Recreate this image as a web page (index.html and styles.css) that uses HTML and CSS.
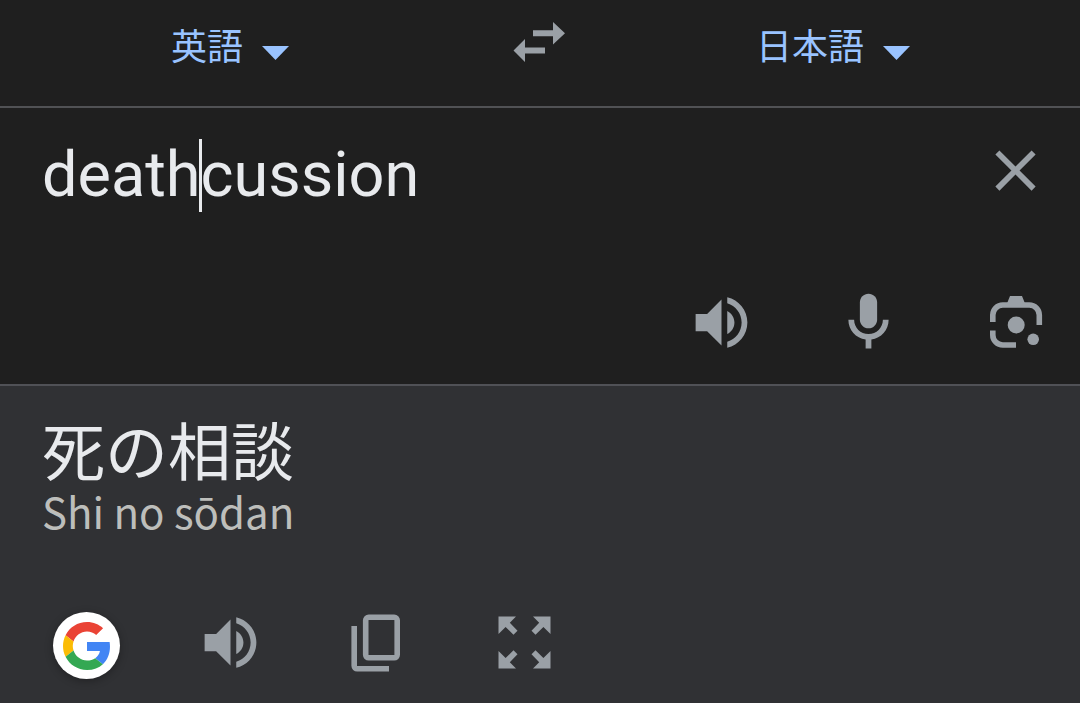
FILE: index.html
```html
<!DOCTYPE html>
<html lang="ja">
<head>
    <meta charset="UTF-8">
    <meta name="viewport" content="width=device-width, initial-scale=1.0">
    <title>翻訳</title>
    <link rel="stylesheet" href="styles.css">
</head>
<body>
    <svg class="sprite">
        <symbol id="volume" viewBox="0 0 24 24">
            <path d="M3 9v6h4l5 5V4L7 9H3zm13.5 3c0-1.77-1.02-3.29-2.5-4.03v8.05c1.48-.73 2.5-2.25 2.5-4.02zM14 3.23v2.06c2.89.86 5 3.54 5 6.71s-2.11 5.85-5 6.71v2.06c4.01-.91 7-4.49 7-8.77s-2.99-7.86-7-8.77z"/>
        </symbol>
    </svg>

    <div class="translator">
        <div class="languages">
            <div class="language">
                <span>英語</span>
                <svg class="caret" viewBox="0 0 27 14"><path d="M0 0h27L13.500 14z"/></svg>
            </div>
            <svg class="swap" viewBox="0 0 52 40">
                <path d="M20 8.200h20V0l12 11.200-12 11.300v-8.300H20zM32 25.500H12V17L.5 28.500 12 40v-8.500h20z"/>
            </svg>
            <div class="language">
                <span>日本語</span>
                <svg class="caret" viewBox="0 0 27 14"><path d="M0 0h27L13.500 14z"/></svg>
            </div>
        </div>

        <div class="source">
            <div class="source-row">
                <div class="source-text">death<span class="cursor"></span>cussion</div>
                <svg class="icon" viewBox="0 0 24 24">
                    <path d="M19 6.410L17.590 5 12 10.590 6.410 5 5 6.410 10.590 12 5 17.590 6.410 19 12 13.410 17.590 19 19 17.590 13.410 12z"/>
                </svg>
            </div>
            <div class="source-tools">
                <svg class="icon"><use href="#volume"/></svg>
                <svg class="icon" viewBox="0 0 24 24">
                    <path d="M12 14c1.660 0 3-1.340 3-3V5c0-1.660-1.340-3-3-3S9 3.340 9 5v6c0 1.660 1.340 3 3 3z"/>
                    <path d="M17 11c0 2.760-2.240 5-5 5s-5-2.240-5-5H5c0 3.530 2.610 6.430 6 6.920V21h2v-3.080c3.390-.49 6-3.390 6-6.920h-2z"/>
                </svg>
                <svg class="icon" viewBox="0 0 69 69">
                    <path class="line" d="M11.800 34V27a10 10 0 0 1 10-10h26.500a10 10 0 0 1 10 10v10M11.800 42.500V47a10 10 0 0 0 10 10H35"/>
                    <path d="M26 15.500l3-7.500h12l3 7.500z"/>
                    <circle cx="35.200" cy="37" r="8.500"/>
                    <circle cx="52.200" cy="51.300" r="5.800"/>
                </svg>
            </div>
        </div>

        <div class="result">
            <div class="result-text">死の相談</div>
            <div class="reading">Shi no sōdan</div>
            <div class="result-tools">
                <div class="google">
                    <svg class="logo" viewBox="0 0 48 48">
                        <path fill="#ea4335" d="M24 9.500c3.540 0 6.710 1.220 9.210 3.600l6.850-6.850C35.900 2.380 30.470 0 24 0 14.620 0 6.510 5.380 2.560 13.220l7.980 6.190C12.430 13.720 17.740 9.500 24 9.500z"/>
                        <path fill="#4285f4" d="M46.980 24.550c0-1.570-.15-3.090-.38-4.550H24v9.020h12.940c-.58 2.960-2.260 5.480-4.780 7.180l7.730 6c4.510-4.180 7.090-10.360 7.090-17.650z"/>
                        <path fill="#fbbc05" d="M10.530 28.590c-.48-1.450-.76-2.990-.76-4.590s.27-3.140.76-4.590l-7.980-6.190C.92 16.460 0 20.120 0 24c0 3.880.92 7.540 2.560 10.780l7.970-6.190z"/>
                        <path fill="#34a853" d="M24 48c6.480 0 11.930-2.130 15.890-5.810l-7.730-6c-2.150 1.450-4.920 2.300-8.160 2.300-6.260 0-11.570-4.220-13.470-9.910l-7.980 6.190C6.510 42.620 14.620 48 24 48z"/>
                    </svg>
                </div>
                <svg class="icon"><use href="#volume"/></svg>
                <svg class="icon" viewBox="0 0 69 69">
                    <rect class="line" x="22.700" y="9.300" width="31.500" height="40.500" rx="3"/>
                    <path class="line" d="M11.200 18v39.800a3 3 0 0 0 3 3H46"/>
                </svg>
                <svg class="icon" viewBox="0 0 69 69">
                    <path d="M8.500 8.500H26l-6.200 6.200 7.700 8-4 4-7.900-7.800L8.500 26z"/>
                    <path d="M60.500 8.500V26l-7.100-7.100-7.900 7.800-4-4 7.700-8L43 8.500z"/>
                    <path d="M60.500 60.500H43l6.200-6.200-7.700-8 4-4 7.900 7.800 7.100-7.100z"/>
                    <path d="M8.500 60.500V43l7.100 7.100 7.900-7.800 4 4-7.700 8 6.200 6.200z"/>
                </svg>
            </div>
        </div>
    </div>
</body>
</html>
```
FILE: styles.css
```css
* {
    box-sizing: border-box;
}

body {
    margin: 0;
    background: #1f1f1f;
    color: #e8eaed;
    font-family: Roboto, "Noto Sans CJK JP", sans-serif;
    overflow: hidden;
}

svg {
    display: block;
    flex-shrink: 0;
}

.sprite {
    display: none;
}

.translator {
    display: flex;
    flex-direction: column;
    height: 703px;
}

.languages {
    display: flex;
    height: 108px;
    padding: 22px 0 0 171px;
    border-bottom: 2px solid #505154;
}

.language {
    display: flex;
    gap: 19px;
    height: 48px;
    color: #99c3ff;
    font-family: "Noto Sans CJK JP", sans-serif;
    font-size: 36px;
    line-height: 44px;
}

.caret {
    width: 27px;
    height: 14px;
    margin-top: 24px;
    fill: #99c3ff;
}

.swap {
    width: 52px;
    height: 40px;
    margin: 0 191px 0 224px;
    fill: #9aa0a6;
}

.source {
    display: flex;
    flex-direction: column;
    justify-content: space-between;
    height: 278px;
    padding: 28px 30px 27px 42px;
    border-bottom: 2px solid #505156;
}

.source-row {
    display: flex;
    justify-content: space-between;
}

.source-text {
    display: flex;
    font-size: 63px;
    line-height: 78px;
}

.cursor {
    width: 3px;
    height: 73px;
    margin: 3px -1px 0 -2px;
    background: #e8eaed;
}

.icon {
    width: 69px;
    height: 69px;
    fill: #9aa0a6;
}

.line {
    fill: none;
    stroke: #9aa0a6;
    stroke-width: 5.600px;
}

.source-tools {
    display: flex;
    justify-content: flex-end;
    gap: 78px;
}

.result {
    flex: 1;
    padding: 30px 42px 0;
    background: #303134;
    font-family: "Noto Sans CJK JP", sans-serif;
}

.result-text {
    font-size: 63px;
    line-height: 64px;
}

.reading {
    color: #bdbebb;
    font-size: 42px;
    line-height: 62px;
}

.result-tools {
    display: flex;
    gap: 78px;
    margin-top: 66px;
    padding-left: 11px;
}

.google {
    display: flex;
    align-items: center;
    justify-content: center;
    width: 67px;
    height: 67px;
    margin: 4px -2px 0 0;
    border-radius: 50%;
    background: #fff;
    box-shadow: 0 2px 8px rgba(0, 0, 0, 0.3);
}

.logo {
    width: 48px;
    height: 48px;
}
```
